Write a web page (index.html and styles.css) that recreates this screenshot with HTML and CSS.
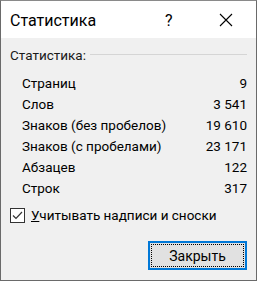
FILE: index.html
```html
<!DOCTYPE html>
<html lang="ru">
<head>
    <meta charset="UTF-8">
    <meta name="viewport" content="width=device-width, initial-scale=1.0">
    <title>Статистика</title>
    <link rel="stylesheet" href="styles.css">
</head>
<body>
    <div class="dialog">
        <div class="titlebar">
            <span class="title">Статистика</span>
            <span class="help">?</span>
            <span class="close">
                <svg width="14" height="14" viewBox="0 0 14 14">
                    <path d="M1 1 L13 13 M13 1 L1 13" stroke="#000" stroke-width="1.1" fill="none"/>
                </svg>
            </span>
        </div>

        <div class="content">
            <div class="group-header">
                <span>Статистика:</span>
                <span class="group-line"></span>
            </div>

            <div class="stats">
                <div class="stat-row"><span>Страниц</span><span>9</span></div>
                <div class="stat-row"><span>Слов</span><span>3 541</span></div>
                <div class="stat-row"><span>Знаков (без пробелов)</span><span>19 610</span></div>
                <div class="stat-row"><span>Знаков (с пробелами)</span><span>23 171</span></div>
                <div class="stat-row"><span>Абзацев</span><span>122</span></div>
                <div class="stat-row"><span>Строк</span><span>317</span></div>
            </div>

            <label class="check-row">
                <span class="checkbox">
                    <svg width="13" height="13" viewBox="0 0 13 13">
                        <path d="M2 6.5 L5 9.5 L11 3" stroke="#333" stroke-width="1.2" fill="none"/>
                    </svg>
                </span>
                <span><u>У</u>читывать надписи и сноски</span>
            </label>

            <div class="footer">
                <button class="btn">Закрыть</button>
            </div>
        </div>
    </div>
</body>
</html>
```

FILE: styles.css
```css
html, body {
    margin: 0;
    padding: 0;
}

body {
    font-family: "Segoe UI", Roboto, "Noto Sans", sans-serif;
    font-size: 13.5px;
    color: #000;
    background: #f0f0f0;
}

.dialog {
    box-sizing: border-box;
    width: 257px;
    height: 281px;
    border: 1px solid #6a6a6a;
    border-top-color: #8a8a8a;
    background: #f0f0f0;
    display: flex;
    flex-direction: column;
}

.titlebar {
    height: 37px;
    background: #fff;
    display: flex;
    align-items: center;
    padding-left: 9px;
    flex-shrink: 0;
}

.title {
    font-size: 16px;
    flex: 1;
    padding-top: 1px;
}

.help {
    font-size: 16px;
    width: 54px;
    padding-top: 1px;
}

.close {
    width: 14px;
    display: flex;
    align-items: center;
    margin-right: 23px;
}

.content {
    padding: 7px 9px 0 9px;
    flex: 1;
    display: flex;
    flex-direction: column;
}

.group-header {
    display: flex;
    align-items: center;
    height: 20px;
    color: #1a1a1a;
}

.group-line {
    flex: 1;
    height: 0;
    border-top: 1px solid #d5d5d5;
    margin-left: 4px;
    margin-top: -1px;
}

.stats {
    margin-top: 8px;
    padding-left: 12px;
}

.stat-row {
    display: flex;
    justify-content: space-between;
    height: 21px;
    line-height: 21px;
}

.check-row {
    display: flex;
    align-items: center;
    height: 20px;
    margin-top: 6px;
}

.checkbox {
    box-sizing: border-box;
    width: 15px;
    height: 15px;
    border: 1px solid #333;
    background: #fff;
    display: flex;
    align-items: center;
    justify-content: center;
    margin-right: 6px;
}

.footer {
    display: flex;
    justify-content: flex-end;
    margin-top: 16px;
}

.btn {
    position: relative;
    box-sizing: border-box;
    width: 99px;
    height: 29px;
    border: 2px solid #0078d7;
    background: #e1e1e1;
    font-family: inherit;
    font-size: 14px;
    color: #000;
    padding: 0;
}

.btn::after {
    content: "";
    position: absolute;
    left: 1px;
    top: 1px;
    right: 1px;
    bottom: 1px;
    border: 1px dotted #000;
}
```
